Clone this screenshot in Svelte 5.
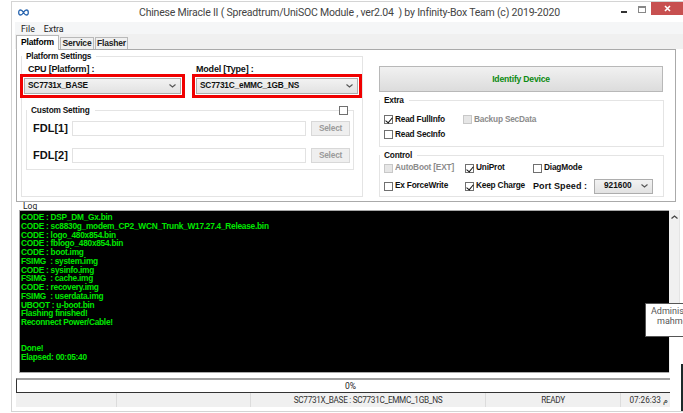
<script>
  const logLines = [
    'CODE : DSP_DM_Gx.bin',
    'CODE : sc8830g_modem_CP2_WCN_Trunk_W17.27.4_Release.bin',
    'CODE : logo_480x854.bin',
    'CODE : fblogo_480x854.bin',
    'CODE : boot.img',
    'FSIMG  : system.img',
    'CODE : sysinfo.img',
    'FSIMG  : cache.img',
    'CODE : recovery.img',
    'FSIMG  : userdata.img',
    'UBOOT : u-boot.bin',
    'Flashing finished!',
    'Reconnect Power/Cable!',
    '',
    '',
    'Done!',
    'Elapsed: 00:05:40'
  ];
</script>

<div class="window">
  <header class="titlebar">
    <svg class="logo" width="11" height="7" viewBox="0 0 11 7"><path d="M5.5 3.5C4.4 1.6 3.5 1 2.5 1 1.4 1 .7 2.1.7 3.5S1.4 6 2.5 6c1 0 1.9-.6 3-2.500C6.600 1.600 7.500 1 8.500 1c1.100 0 1.800 1.100 1.800 2.500S9.600 6 8.500 6c-1 0-1.900-.6-3-2.500z" fill="none" stroke="#2a66b0" stroke-width="1.300"/></svg>
    <span class="title">Chinese Miracle II ( Spreadtrum/UniSOC Module , ver2.04  ) by Infinity-Box Team (c) 2019-2020</span>
    <div class="controls">
      <span class="min"></span>
      <span class="max"></span>
      <span class="close">
        <svg width="7" height="7" viewBox="0 0 7 7"><path d="M1 1l5 5M6 1L1 6" stroke="#fff" stroke-width="1.600"/></svg>
      </span>
    </div>
  </header>

  <nav class="menubar"><span>File</span><span>Extra</span></nav>

  <div class="tabs">
    <span class="tab active">Platform</span>
    <span class="tab t2">Service</span>
    <span class="tab t3">Flasher</span>
  </div>

  <section class="panel">
    <fieldset class="group platform">
      <legend>Platform Settings</legend>
      <div class="fields">
        <div class="field cpu">
          <span class="label">CPU [Platform] :</span>
          <div class="mark">
            <div class="select"><span>SC7731x_BASE</span><svg width="7" height="4" viewBox="0 0 7 4"><path d="M.5.5l3 2.500 3-2.500" fill="none" stroke="#555" stroke-width="1.100"/></svg></div>
          </div>
        </div>
        <div class="field model">
          <span class="label">Model [Type] :</span>
          <div class="mark">
            <div class="select"><span>SC7731C_eMMC_1GB_NS</span><svg width="7" height="4" viewBox="0 0 7 4"><path d="M.5.5l3 2.500 3-2.500" fill="none" stroke="#555" stroke-width="1.100"/></svg></div>
          </div>
        </div>
      </div>
      <fieldset class="group custom">
        <legend>Custom Setting</legend>
        <span class="custom-check"></span>
        <div class="fdl first"><b>FDL[1]</b><div class="input"></div><div class="btn">Select</div></div>
        <div class="fdl"><b>FDL[2]</b><div class="input"></div><div class="btn">Select</div></div>
      </fieldset>
    </fieldset>

    <div class="right">
      <div class="identify">Identify Device</div>
      <fieldset class="group extra">
        <legend>Extra</legend>
        <div class="extra-grid">
          <div class="chk"><span class="box on"></span>Read FullInfo</div>
          <div class="chk off"><span class="box"></span>Backup SecData</div>
          <div class="chk"><span class="box"></span>Read SecInfo</div>
        </div>
      </fieldset>
      <fieldset class="group control">
        <legend>Control</legend>
        <div class="control-grid">
          <div class="chk off"><span class="box"></span>AutoBoot [EXT]</div>
          <div class="chk"><span class="box on"></span>UniProt</div>
          <div class="chk"><span class="box"></span>DiagMode</div>
          <div class="chk"><span class="box"></span>Ex ForceWrite</div>
          <div class="chk"><span class="box on"></span>Keep Charge</div>
          <div class="port"><span class="port-label">Port Speed :</span>
            <div class="select speed"><span>921600</span><svg width="7" height="4" viewBox="0 0 7 4"><path d="M.5.5l3 2.500 3-2.500" fill="none" stroke="#555" stroke-width="1.100"/></svg></div>
          </div>
        </div>
      </fieldset>
    </div>
  </section>

  <div class="log-label">Log</div>
  <div class="log-row">
    <div class="log">
      {#each logLines as line}
        <div class="line">{line}</div>
      {/each}
    </div>
    <div class="scroll">
      <svg width="7" height="4" viewBox="0 0 7 4"><path d="M.5 3.500l3-2.500 3 2.500" fill="none" stroke="#444" stroke-width="1.300"/></svg>
    </div>
  </div>

  <div class="progress">0%</div>

  <footer class="status">
    <span class="s1"></span>
    <span class="s2"></span>
    <span class="s3">SC7731X_BASE : SC7731C_EMMC_1GB_NS</span>
    <span class="s4">READY</span>
    <span class="s5">07:26:33 م</span>
  </footer>

  <div class="behind"><i></i></div>
  <div class="tooltip">Administ<br /><span class="tip2">mahmo</span></div>
</div>

<style>
  :global(body) {
    margin: 0;
    background: #fff;
    overflow: hidden;
  }
  * {
    box-sizing: border-box;
  }
  .window {
    position: relative;
    margin: 1px 0 0 11px;
    width: 672px;
    height: 411px;
    border-top: 1px solid #d4d4d4;
    border-left: 1px solid #d4d4d4;
    border-bottom: 1px solid #d4d4d4;
    background: #fff;
    font: 700 8.300px/1.200 "Liberation Sans", sans-serif;
    letter-spacing: -0.200px;
    color: #111;
    overflow: hidden;
  }
  .titlebar {
    height: 20px;
    display: flex;
    align-items: center;
    position: relative;
    padding-left: 6px;
  }
  .title {
    position: absolute;
    left: 127px;
    top: 3px;
    font: 400 10.500px/15px "Roboto", sans-serif;
    letter-spacing: -0.200px;
    color: #444;
    white-space: pre;
  }
  .controls {
    margin-left: auto;
    display: flex;
    align-items: flex-start;
    height: 100%;
  }
  .min {
    width: 6px;
    height: 2px;
    background: #333;
    margin: 9px 11px 0 0;
  }
  .max {
    width: 8px;
    height: 7px;
    border: 1px solid #888;
    border-top-width: 2px;
    margin: 4px 5px 0 0;
  }
  .close {
    width: 32px;
    height: 13px;
    background: #c75050;
    display: flex;
    align-items: center;
    justify-content: center;
  }
  .menubar {
    margin-left: 3px;
    height: 12px;
    background: #f5f6f7;
    display: flex;
    gap: 9px;
    padding: 1px 0 0 6px;
    font: 400 8.800px/12px "Roboto", sans-serif;
    letter-spacing: 0;
    color: #222;
  }
  .tabs {
    margin-left: 3px;
    height: 15px;
    background: #f0f0f0;
    display: flex;
    align-items: flex-end;
    padding-left: 1px;
    gap: 1px;
  }
  .tab {
    height: 12px;
    border: 1px solid #b9b9b9;
    border-bottom: 0;
    background: #f0f0f0;
    font-size: 8.500px;
    line-height: 11px;
    color: #222;
    text-align: center;
  }
  .t2 { width: 34px; }
  .t3 { width: 33px; }
  .tab.active {
    height: 15px;
    width: 43px;
    background: #fff;
    line-height: 12px;
    color: #000;
    margin-bottom: -1px;
    position: relative;
    z-index: 1;
  }
  .panel {
    margin-left: 4px;
    width: 660px;
    height: 153px;
    border: 1px solid #aaa;
    padding: 0 0 0 4px;
    display: grid;
    grid-template-columns: 342px 285px;
    column-gap: 16px;
    align-items: start;
  }
  .group {
    margin: 0;
    padding: 0;
    min-width: 0;
    border: 1px solid #e4e4e4;
  }
  .group legend {
    padding: 0 5px 0 4px;
    margin-left: 0;
    font-size: 8.300px;
    line-height: 12px;
    height: 12px;
  }
  .platform {
    height: 147px;
    position: relative;
  }
  .fields {
    display: flex;
    gap: 7px;
    margin: 3px 0 0 -2px;
  }
  .label {
    display: block;
    font-size: 9px;
    line-height: 9px;
    padding-left: 8px;
    height: 9px;
    white-space: nowrap;
  }
  .model .label {
    padding-left: 4px;
  }
  .cpu { width: 165px; }
  .model { width: 170px; }
  .mark {
    border: 3px solid #f00000;
    height: 24px;
    padding: 1px;
    background: #fff;
  }
  .select {
    height: 100%;
    border: 1px solid #adadad;
    background: linear-gradient(#f2f2f2, #e2e2e2);
    display: flex;
    align-items: center;
    justify-content: space-between;
    padding: 0 4px 0 3px;
    font-size: 8.300px;
    color: #111;
  }
  .custom {
    position: relative;
    width: 328px;
    height: 66px;
    margin: 6px 0 0 4px;
  }
  .custom-check {
    position: absolute;
    right: 5px;
    top: -10px;
    width: 9px;
    height: 9px;
    border: 1px solid #707070;
    background: #fff;
  }
  .fdl {
    display: grid;
    grid-template-columns: 34px 234px 39px;
    column-gap: 5px;
    padding-left: 6px;
    height: 15px;
    margin-bottom: 12px;
    align-items: center;
  }
  .fdl.first {
    margin-top: 5px;
  }
  .fdl b {
    font-size: 11px;
    line-height: 15px;
    letter-spacing: 0;
    white-space: nowrap;
  }
  .input {
    height: 15px;
    border: 1px solid #e2e2e2;
    background: #fff;
  }
  .btn {
    height: 15px;
    border: 1px solid #d8d8d8;
    background: #efefef;
    color: #9a9a9a;
    text-align: center;
    font-size: 8.300px;
    line-height: 13px;
  }
  .right {
    display: flex;
    flex-direction: column;
  }
  .identify {
    margin-top: 16px;
    height: 26px;
    border: 1px solid #b8b8b8;
    background: linear-gradient(#f1f1f1, #dcdcdc);
    color: #0b8a12;
    font-size: 8.600px;
    line-height: 24px;
    text-align: center;
    margin-right: 1px;
  }
  .extra {
    margin-top: 2px;
    height: 53px;
  }
  .control {
    margin-top: 2px;
    height: 48px;
  }
  .extra-grid {
    display: grid;
    grid-template-columns: 79px auto;
    grid-auto-rows: 15px;
    margin: 6px 0 0 4px;
  }
  .control-grid {
    display: grid;
    grid-template-columns: 81px 68px auto;
    grid-auto-rows: 18px;
    margin: -2px 0 0 4px;
  }
  .chk {
    display: flex;
    align-items: center;
    gap: 2px;
    font-size: 8.300px;
    white-space: nowrap;
  }
  .chk.off {
    color: #8c8c8c;
  }
  .box {
    display: inline-block;
    position: relative;
    width: 9px;
    height: 9px;
    border: 1px solid #707070;
    background: #fff;
    flex: none;
  }
  .chk.off .box {
    border-color: #c8c8c8;
    background: #e6e6e6;
  }
  .box.on::after {
    content: "";
    position: absolute;
    left: 2px;
    top: 0;
    width: 3px;
    height: 6px;
    border: solid #111;
    border-width: 0 1.500px 1.500px 0;
    transform: rotate(40deg);
  }
  .port {
    display: flex;
    align-items: center;
    justify-content: space-between;
    width: 120px;
    font-size: 9px;
    letter-spacing: 0.100px;
  }
  .port-label {
    white-space: nowrap;
  }
  .speed {
    width: 59px;
    height: 15px;
    padding: 0 4px 0 9px;
    letter-spacing: 0;
  }
  .log-label {
    margin-left: 11px;
    height: 8px;
    font: 400 8.500px/8px "Roboto", sans-serif;
    letter-spacing: 0;
    color: #222;
    background: #fff;
  }
  .log-row {
    margin-left: 7px;
    display: flex;
    height: 163px;
  }
  .log {
    width: 650px;
    height: 163px;
    border: 1.500px solid #a8a8a8;
    border-right: 0;
    background: #000;
    color: #00e800;
    font-size: 8.300px;
    letter-spacing: -0.250px;
    padding: 2px 0 0 1px;
    overflow: hidden;
  }
  .line {
    height: 8.750px;
    line-height: 8.750px;
    white-space: pre;
  }
  .scroll {
    width: 11px;
    background: #f0f0f0;
    border-right: 1px solid #e4e4e4;
    display: flex;
    justify-content: center;
    padding-top: 5px;
  }
  .progress {
    margin: 5px 0 0 4px;
    width: 654px;
    height: 15px;
    background: #fff;
    border-top: 2px solid #a0a0a0;
    border-left: 1px solid #333;
    border-bottom: 1px solid #333;
    text-align: center;
    padding-left: 14px;
    font: 400 8.500px/12px "Roboto", sans-serif;
    letter-spacing: 0;
    color: #222;
  }
  .status {
    margin-left: 4px;
    width: 654px;
    height: 14px;
    background: #f0f0f0;
    display: grid;
    grid-template-columns: 101px 134px 235px 135px 49px;
    font: 400 8.200px/14px "Roboto", sans-serif;
    letter-spacing: -0.300px;
    color: #333;
    text-align: center;
    white-space: nowrap;
  }
  .status span {
    border-right: 1px solid #dcdcdc;
    overflow: hidden;
  }
  .status .s5 {
    border-right: 0;
    text-align: right;
    padding-right: 2px;
  }
  .behind {
    position: absolute;
    left: 658px;
    top: 334px;
    width: 14px;
    height: 76px;
    background: #fff;
  }
  .behind i {
    position: absolute;
    left: 11px;
    top: 28px;
    width: 3px;
    height: 48px;
    background: #1c2a2a;
  }
  .tooltip {
    position: absolute;
    left: 633px;
    top: 301px;
    width: 39px;
    height: 34px;
    border: 1px solid #555;
    border-right: 0;
    background: #fff;
    padding: 2px 0 0 5px;
    font: 400 9px/10px "Roboto", sans-serif;
    letter-spacing: 0;
    color: #555;
    white-space: nowrap;
    overflow: hidden;
  }
  .tip2 {
    padding-left: 6px;
  }
</style>
